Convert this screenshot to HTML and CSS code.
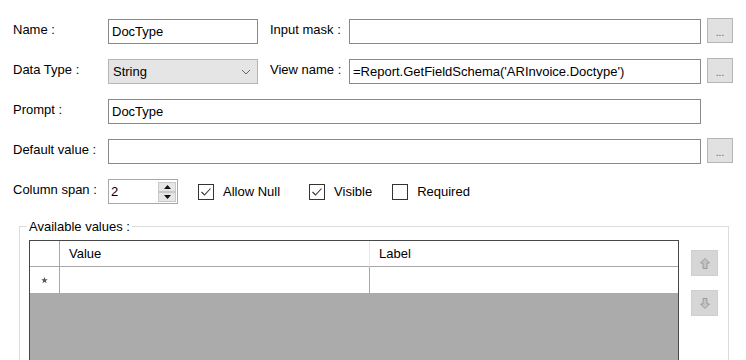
FILE: index.html
```html
<!DOCTYPE html>
<html lang="en">
<head>
    <meta charset="UTF-8">
    <title>Field Properties</title>
    <link rel="stylesheet" href="styles.css">
</head>
<body>
    <div class="form">
        <div class="row">
            <span class="label">Name :</span>
            <input class="field short" type="text" value="DocType">
            <span class="label mid">Input mask :</span>
            <input class="field grow" type="text" value="">
            <button class="dots">...</button>
        </div>
        <div class="row">
            <span class="label">Data Type :</span>
            <div class="combo short">
                <span>String</span>
                <svg width="10" height="6" viewBox="0 0 10 6"><path d="M1 1 L5 5 L9 1" fill="none" stroke="#666" stroke-width="1"/></svg>
            </div>
            <span class="label mid">View name :</span>
            <input class="field grow" type="text" value="=Report.GetFieldSchema('ARInvoice.Doctype')">
            <button class="dots">...</button>
        </div>
        <div class="row">
            <span class="label">Prompt :</span>
            <input class="field grow" type="text" value="DocType">
            <span class="spacer"></span>
        </div>
        <div class="row">
            <span class="label">Default value :</span>
            <input class="field grow" type="text" value="">
            <button class="dots">...</button>
        </div>
        <div class="row">
            <span class="label">Column span :</span>
            <div class="spin">
                <span class="spin-value">2</span>
                <div class="spin-buttons">
                    <span class="spin-btn"><svg width="7" height="4" viewBox="0 0 7 4"><path d="M3.5 0 L7 4 L0 4 Z" fill="#111"/></svg></span>
                    <span class="spin-btn"><svg width="7" height="4" viewBox="0 0 7 4"><path d="M0 0 L7 0 L3.5 4 Z" fill="#111"/></svg></span>
                </div>
            </div>
            <span class="check first"><span class="box"><svg width="14" height="14" viewBox="0 0 14 14"><path d="M2.5 7 L5.5 10 L11.5 3.5" fill="none" stroke="#333" stroke-width="1.1"/></svg></span>Allow Null</span>
            <span class="check"><span class="box"><svg width="14" height="14" viewBox="0 0 14 14"><path d="M2.5 7 L5.5 10 L11.5 3.5" fill="none" stroke="#333" stroke-width="1.1"/></svg></span>Visible</span>
            <span class="check"><span class="box"></span>Required</span>
        </div>

        <fieldset class="values">
            <legend>Available values :</legend>
            <div class="values-body">
                <div class="grid">
                    <div class="cell head corner"></div>
                    <div class="cell head">Value</div>
                    <div class="cell head last">Label</div>
                    <div class="cell rowhead"><svg width="7" height="7" viewBox="0 0 7 7"><path d="M3.5 0 L4.3 2.3 L6.8 2.3 L4.8 3.8 L5.6 6.3 L3.5 4.8 L1.4 6.3 L2.2 3.8 L0.2 2.3 L2.7 2.3 Z" fill="#555"/></svg></div>
                    <div class="cell data"></div>
                    <div class="cell data last"></div>
                </div>
                <div class="movers">
                    <span class="mover"><svg width="10" height="11" viewBox="0 0 10 11"><path d="M5 0.5 L9.5 5 L7 5 L7 10.5 L3 10.5 L3 5 L0.5 5 Z" fill="#c4c4c4" stroke="#9a9a9a" stroke-width="1"/></svg></span>
                    <span class="mover"><svg width="10" height="11" viewBox="0 0 10 11"><path d="M5 10.5 L9.5 6 L7 6 L7 0.5 L3 0.5 L3 6 L0.5 6 Z" fill="#c4c4c4" stroke="#9a9a9a" stroke-width="1"/></svg></span>
                </div>
            </div>
        </fieldset>
    </div>
</body>
</html>
```

FILE: styles.css
```css
body {
    margin: 0;
    font-family: "Liberation Sans", Arial, sans-serif;
    font-size: 13px;
    color: #000;
    background: #fff;
    overflow: hidden;
    height: 360px;
}

.form {
    padding: 19px 13px 0 13px;
}

.row {
    display: flex;
    align-items: flex-start;
    height: 25px;
    margin-bottom: 15px;
}

.label {
    width: 95px;
    padding-top: 3px;
    line-height: 15px;
    flex: none;
}

.label.mid {
    width: 79px;
    margin-left: 12px;
}

.field {
    box-sizing: border-box;
    height: 25px;
    border: 1px solid #8a8a8a;
    padding: 0 3px;
    font: inherit;
    color: #000;
    background: #fff;
    outline: none;
    margin: 0;
}

.short {
    width: 150px;
    flex: none;
}

.grow {
    flex: 1;
    min-width: 0;
}

.dots {
    box-sizing: border-box;
    width: 26px;
    height: 25px;
    margin: -1px 0 0 6px;
    padding: 4px 0 0 0;
    border: 1px solid #b5b5b5;
    background: #e1e1e1;
    color: #555;
    font-family: "Liberation Sans", Arial, sans-serif;
    font-size: 10px;
    flex: none;
}

.spacer {
    width: 32px;
    flex: none;
}

.combo {
    box-sizing: border-box;
    height: 25px;
    border: 1px solid #b5b5b5;
    background: #e5e5e5;
    display: flex;
    align-items: center;
    justify-content: space-between;
    padding: 0 6px 0 4px;
}

.spin {
    box-sizing: border-box;
    width: 70px;
    height: 25px;
    border: 1px solid #a8a8a8;
    display: flex;
    align-items: center;
    justify-content: space-between;
    padding: 0 1px 0 2px;
}

.spin-buttons {
    display: flex;
    flex-direction: column;
}

.spin-btn {
    box-sizing: border-box;
    width: 18px;
    height: 10px;
    background: #e6e6e6;
    border: 1px solid #c8c8c8;
    display: flex;
    align-items: center;
    justify-content: center;
}

.check {
    display: flex;
    align-items: center;
    height: 25px;
    margin-left: 29px;
}

.check.first {
    margin-left: 20px;
}

.box {
    box-sizing: border-box;
    width: 16px;
    height: 16px;
    border: 1px solid #333;
    margin-right: 9px;
    display: flex;
    align-items: center;
    justify-content: center;
}

.check:last-child {
    margin-left: 20px;
}

.values {
    margin: 1px 4px 0 6px;
    padding: 6px 10px 0 9px;
    border: 1px solid #dcdcdc;
    border-bottom: none;
}

.values legend {
    padding: 0 2px;
    margin-left: -2px;
    line-height: 15px;
}

.values-body {
    display: flex;
    align-items: flex-start;
}

.grid {
    flex: 1;
    height: 119px;
    border: 1px solid #474747;
    border-bottom: none;
    background: #ababab;
    display: grid;
    grid-template-columns: 30px 310px 1fr;
    grid-template-rows: 26px 26px;
    align-content: start;
}

.cell {
    background: #fff;
    display: flex;
    align-items: center;
    padding-left: 9px;
}

.head {
    border-bottom: 1px solid #a8a8a8;
    border-right: 1px solid #e6e6e6;
}

.rowhead {
    border-right: 1px solid #a8a8a8;
    justify-content: center;
    padding-left: 0;
}

.data {
    border-right: 1px solid #a8a8a8;
}

.corner {
    border-right: 1px solid #a8a8a8;
}

.last {
    border-right: none;
}

.movers {
    display: flex;
    flex-direction: column;
    margin-left: 12px;
    margin-top: 10px;
    gap: 14px;
}

.mover {
    box-sizing: border-box;
    width: 27px;
    height: 26px;
    background: #d6d6d6;
    border: 1px solid #cfcfcf;
    display: flex;
    align-items: center;
    justify-content: center;
}
```
